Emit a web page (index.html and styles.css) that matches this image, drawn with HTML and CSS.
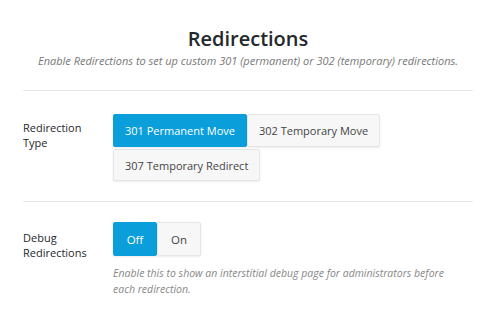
FILE: index.html
```html
<!DOCTYPE html>
<html lang="en">
<head>
    <meta charset="UTF-8">
    <title>Redirections</title>
    <link rel="stylesheet" href="styles.css">
</head>
<body>
    <div class="panel">
        <div class="header">
            <h2>Redirections</h2>
            <p class="lead">Enable Redirections to set up custom 301 (permanent) or 302 (temporary) redirections.</p>
        </div>
        <div class="row">
            <div class="label">Redirection Type</div>
            <div class="field">
                <div class="choices">
                    <button class="choice active">301 Permanent Move</button>
                    <button class="choice">302 Temporary Move</button>
                    <button class="choice">307 Temporary Redirect</button>
                </div>
            </div>
        </div>
        <div class="row last">
            <div class="label">Debug Redirections</div>
            <div class="field">
                <div class="toggle">
                    <button class="choice active">Off</button>
                    <button class="choice">On</button>
                </div>
                <p class="help">Enable this to show an interstitial debug page for administrators before each redirection.</p>
            </div>
        </div>
    </div>
</body>
</html>
```

FILE: styles.css
```css
body {
    margin: 0;
    background: #fff;
    font-family: "Open Sans", "Noto Sans", sans-serif;
    color: #23282d;
}
.panel {
    margin: 0 19px 0 23px;
}
.header {
    text-align: center;
    padding-top: 26px;
    padding-bottom: 22px;
    border-bottom: 1px solid #e8e8e8;
}
.header h2 {
    margin: 0;
    font-size: 20px;
    font-weight: 600;
    line-height: 26px;
}
.lead {
    margin: 1px 0 0;
    font-size: 11px;
    font-style: italic;
    color: #777;
}
.row {
    display: flex;
    padding: 23px 0 20px;
    border-bottom: 1px solid #e8e8e8;
}
.row.last {
    padding-top: 20px;
    border-bottom: none;
}
.label {
    width: 90px;
    flex-shrink: 0;
    font-size: 11px;
    line-height: 15px;
    padding-top: 6px;
    padding-right: 20px;
    box-sizing: border-box;
}
.row.last .label {
    padding-top: 8px;
}
.choices {
    display: flex;
    flex-wrap: wrap;
    gap: 2px 0;
    max-width: 280px;
}
.choice {
    font-family: inherit;
    font-size: 11px;
    color: #444;
    background: #f7f7f7;
    border: 1px solid #e5e5e5;
    border-radius: 2px;
    box-shadow: 0 1px 2px rgba(0, 0, 0, 0.08);
    height: 33px;
    padding: 0 11px;
    cursor: pointer;
}
.choice.active {
    background: #0a9edb;
    border-color: #0a9edb;
    color: #fff;
}
.choices .choice:nth-child(3) {
    height: 32px;
}
.toggle {
    display: flex;
}
.toggle .choice {
    width: 44px;
    height: 34px;
    padding: 0;
    font-size: 11.5px;
}
.help {
    margin: 9px 0 0;
    padding-right: 14px;
    font-size: 10.5px;
    line-height: 16px;
    font-style: italic;
    color: #888;
}
```
